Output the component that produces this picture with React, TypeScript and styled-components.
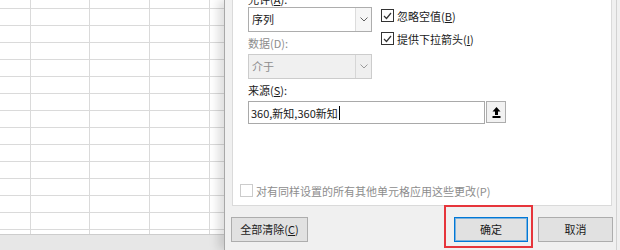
import React from 'react';
import styled, { createGlobalStyle } from 'styled-components';

const GlobalStyle = createGlobalStyle`
  html, body {
    margin: 0;
    padding: 0;
    width: 620px;
    height: 250px;
    overflow: hidden;
    background: #ffffff;
  }
  body {
    font-family: "Noto Sans CJK SC", "Microsoft YaHei", sans-serif;
    font-size: 11px;
    color: #1b1b1b;
  }
`;

const COLS = [30, 58, 59, 59, 14];
const ROWS = [8, ...Array(13).fill(16), 4];

const Screen = styled.div`
  display: flex;
  width: 620px;
  height: 250px;
  overflow: hidden;
`;

const Sheet = styled.div`
  display: flex;
  flex-direction: column;
  width: 224px;
  flex-shrink: 0;
`;

const CellGrid = styled.div`
  display: grid;
  grid-template-columns: ${COLS.map((c) => `${c}px`).join(' ')};
  grid-template-rows: ${ROWS.map((r) => `${r}px`).join(' ')};
  gap: 1px;
  background: #dadada;
  height: 234px;
  overflow: hidden;
`;

const Cell = styled.div`
  background: #ffffff;
`;

const StatusBar = styled.div`
  flex: 1;
  background: #e7e7e7;
  border-top: 1px solid #cdcdcd;
`;

const Dialog = styled.div`
  flex: 1;
  display: flex;
  flex-direction: column;
  background: #f0f0f0;
  border-left: 1px solid #a8a8a8;
  box-shadow: -6px 0 9px rgba(0, 0, 0, 0.13), inset -3px 0 0 #f0f0f0, inset -4px 0 0 #d2d2d2;
  position: relative;
  z-index: 1;
`;

const Panel = styled.div`
  box-sizing: border-box;
  height: 206px;
  margin: 0 8px 0 7px;
  padding: 0 15px 8px 15px;
  background: #ffffff;
  border: 1px solid #dadada;
  border-top: none;
  display: flex;
  flex-direction: column;
`;

const TopRow = styled.div`
  display: flex;
  gap: 9px;
`;

const LeftCol = styled.div`
  width: 124px;
  display: flex;
  flex-direction: column;
`;

const RightCol = styled.div`
  display: flex;
  flex-direction: column;
  gap: 10px;
  padding-top: 9px;
`;

const Label = styled.div<{ $h?: number; $off?: number; $disabled?: boolean }>`
  height: ${(p) => p.$h ?? 22}px;
  line-height: ${(p) => p.$h ?? 22}px;
  margin-top: ${(p) => p.$off ?? 0}px;
  color: ${(p) => (p.$disabled ? '#8d8d8d' : '#1b1b1b')};
  white-space: nowrap;
`;

const Combo = styled.div<{ $disabled?: boolean }>`
  box-sizing: border-box;
  height: 25px;
  display: flex;
  border: 1px solid ${(p) => (p.$disabled ? '#cccccc' : '#adadad')};
  background: ${(p) => (p.$disabled ? '#f0f0f0' : '#ffffff')};
  color: ${(p) => (p.$disabled ? '#8d8d8d' : '#1b1b1b')};
`;

const ComboText = styled.div`
  flex: 1;
  padding-left: 3px;
  line-height: 23px;
`;

const ComboArrow = styled.div<{ $disabled?: boolean }>`
  width: 15px;
  display: flex;
  align-items: center;
  justify-content: center;
  border-left: 1px solid ${(p) => (p.$disabled ? '#d6d6d6' : '#dcdcdc')};
  background: ${(p) => (p.$disabled ? '#efefef' : '#f6f6f6')};
`;

const CheckRow = styled.label<{ $disabled?: boolean; $indent?: number }>`
  display: flex;
  align-items: center;
  gap: 3px;
  height: 13px;
  margin-left: ${(p) => p.$indent ?? 0}px;
  color: ${(p) => (p.$disabled ? '#8d8d8d' : '#1b1b1b')};
  white-space: nowrap;
`;

const Box = styled.span<{ $disabled?: boolean }>`
  box-sizing: border-box;
  width: 13px;
  height: 13px;
  flex-shrink: 0;
  display: flex;
  align-items: center;
  justify-content: center;
  background: #ffffff;
  border: 1px solid ${(p) => (p.$disabled ? '#cccccc' : '#333333')};
`;

const SourceRow = styled.div`
  display: flex;
  gap: 1px;
  width: 258px;
  height: 23px;
`;

const SourceInput = styled.div`
  box-sizing: border-box;
  flex: 1;
  display: flex;
  align-items: center;
  padding-left: 2px;
  border: 1px solid #a9a9a9;
  background: #ffffff;
`;

const Caret = styled.span`
  display: inline-block;
  width: 1px;
  height: 14px;
  background: #000000;
  margin-left: 1px;
`;

const CollapseButton = styled.div`
  box-sizing: border-box;
  width: 20px;
  height: 22px;
  display: flex;
  align-items: center;
  justify-content: center;
  border: 1px solid #adadad;
  background: #f2f2f2;
`;

const Spacer = styled.div`
  flex: 1;
`;

const Footer = styled.div`
  display: flex;
  align-items: center;
  padding: 11px 7px 0 6px;
`;

const Button = styled.div<{ $w: number; $primary?: boolean }>`
  box-sizing: border-box;
  width: ${(p) => p.$w}px;
  height: 25px;
  line-height: 23px;
  text-align: center;
  background: #e1e1e1;
  border: 1px solid ${(p) => (p.$primary ? '#0078d7' : '#adadad')};
  box-shadow: ${(p) => (p.$primary ? 'inset 0 0 0 1px rgba(0, 120, 215, 0.45)' : 'none')};
  color: #1b1b1b;
`;

const Highlight = styled.div`
  position: relative;
  margin-right: 10px;
  &::after {
    content: '';
    position: absolute;
    top: -12px;
    left: -10px;
    right: -5px;
    bottom: -6px;
    border: 2px solid #e6353b;
    pointer-events: none;
  }
`;

const Key = styled.span`
  text-decoration: underline;
  text-underline-offset: 1px;
`;

const Chevron = ({ color }: { color: string }) => (
  <svg width="8" height="5" viewBox="0 0 8 5">
    <polyline points="0.5,0.5 4,4 7.5,0.5" fill="none" stroke={color} strokeWidth="1" />
  </svg>
);

const Tick = () => (
  <svg width="9" height="8" viewBox="0 0 9 8">
    <polyline points="1,4 3.5,6.5 8,1" fill="none" stroke="#333" strokeWidth="1.2" />
  </svg>
);

const CollapseIcon = () => (
  <svg width="9" height="11" viewBox="0 0 9 11">
    <polygon points="4.5,0 8.5,4.5 6,4.5 6,8 3,8 3,4.5 0.5,4.5" fill="#000" />
    <rect x="0.5" y="9" width="8" height="2" fill="#000" />
  </svg>
);

export default function App() {
  const cells = ROWS.flatMap((_, r) => COLS.map((_, c) => <Cell key={`${r}-${c}`} />));

  return (
    <>
      <GlobalStyle />
      <Screen>
        <Sheet>
          <CellGrid>{cells}</CellGrid>
          <StatusBar />
        </Sheet>
        <Dialog>
          <Panel>
            <TopRow>
              <LeftCol>
                <Label $h={16} $off={-9}>
                  允许(<Key>A</Key>):
                </Label>
                <Combo>
                  <ComboText>序列</ComboText>
                  <ComboArrow>
                    <Chevron color="#606060" />
                  </ComboArrow>
                </Combo>
                <Label $disabled>数据(D):</Label>
                <Combo $disabled>
                  <ComboText>介于</ComboText>
                  <ComboArrow $disabled>
                    <Chevron color="#9a9a9a" />
                  </ComboArrow>
                </Combo>
              </LeftCol>
              <RightCol>
                <CheckRow>
                  <Box>
                    <Tick />
                  </Box>
                  <span>
                    忽略空值(<Key>B</Key>)
                  </span>
                </CheckRow>
                <CheckRow>
                  <Box>
                    <Tick />
                  </Box>
                  <span>
                    提供下拉箭头(<Key>I</Key>)
                  </span>
                </CheckRow>
              </RightCol>
            </TopRow>
            <Label>
              来源(<Key>S</Key>):
            </Label>
            <SourceRow>
              <SourceInput>
                <span>360,新知,360新知</span>
                <Caret />
              </SourceInput>
              <CollapseButton>
                <CollapseIcon />
              </CollapseButton>
            </SourceRow>
            <Spacer />
            <CheckRow $disabled $indent={-8}>
              <Box $disabled />
              <span>对有同样设置的所有其他单元格应用这些更改(P)</span>
            </CheckRow>
          </Panel>
          <Footer>
            <Button $w={77}>
              全部清除(<Key>C</Key>)
            </Button>
            <Spacer />
            <Highlight>
              <Button $w={74} $primary>
                确定
              </Button>
            </Highlight>
            <Button $w={75}>取消</Button>
          </Footer>
        </Dialog>
      </Screen>
    </>
  );
}
